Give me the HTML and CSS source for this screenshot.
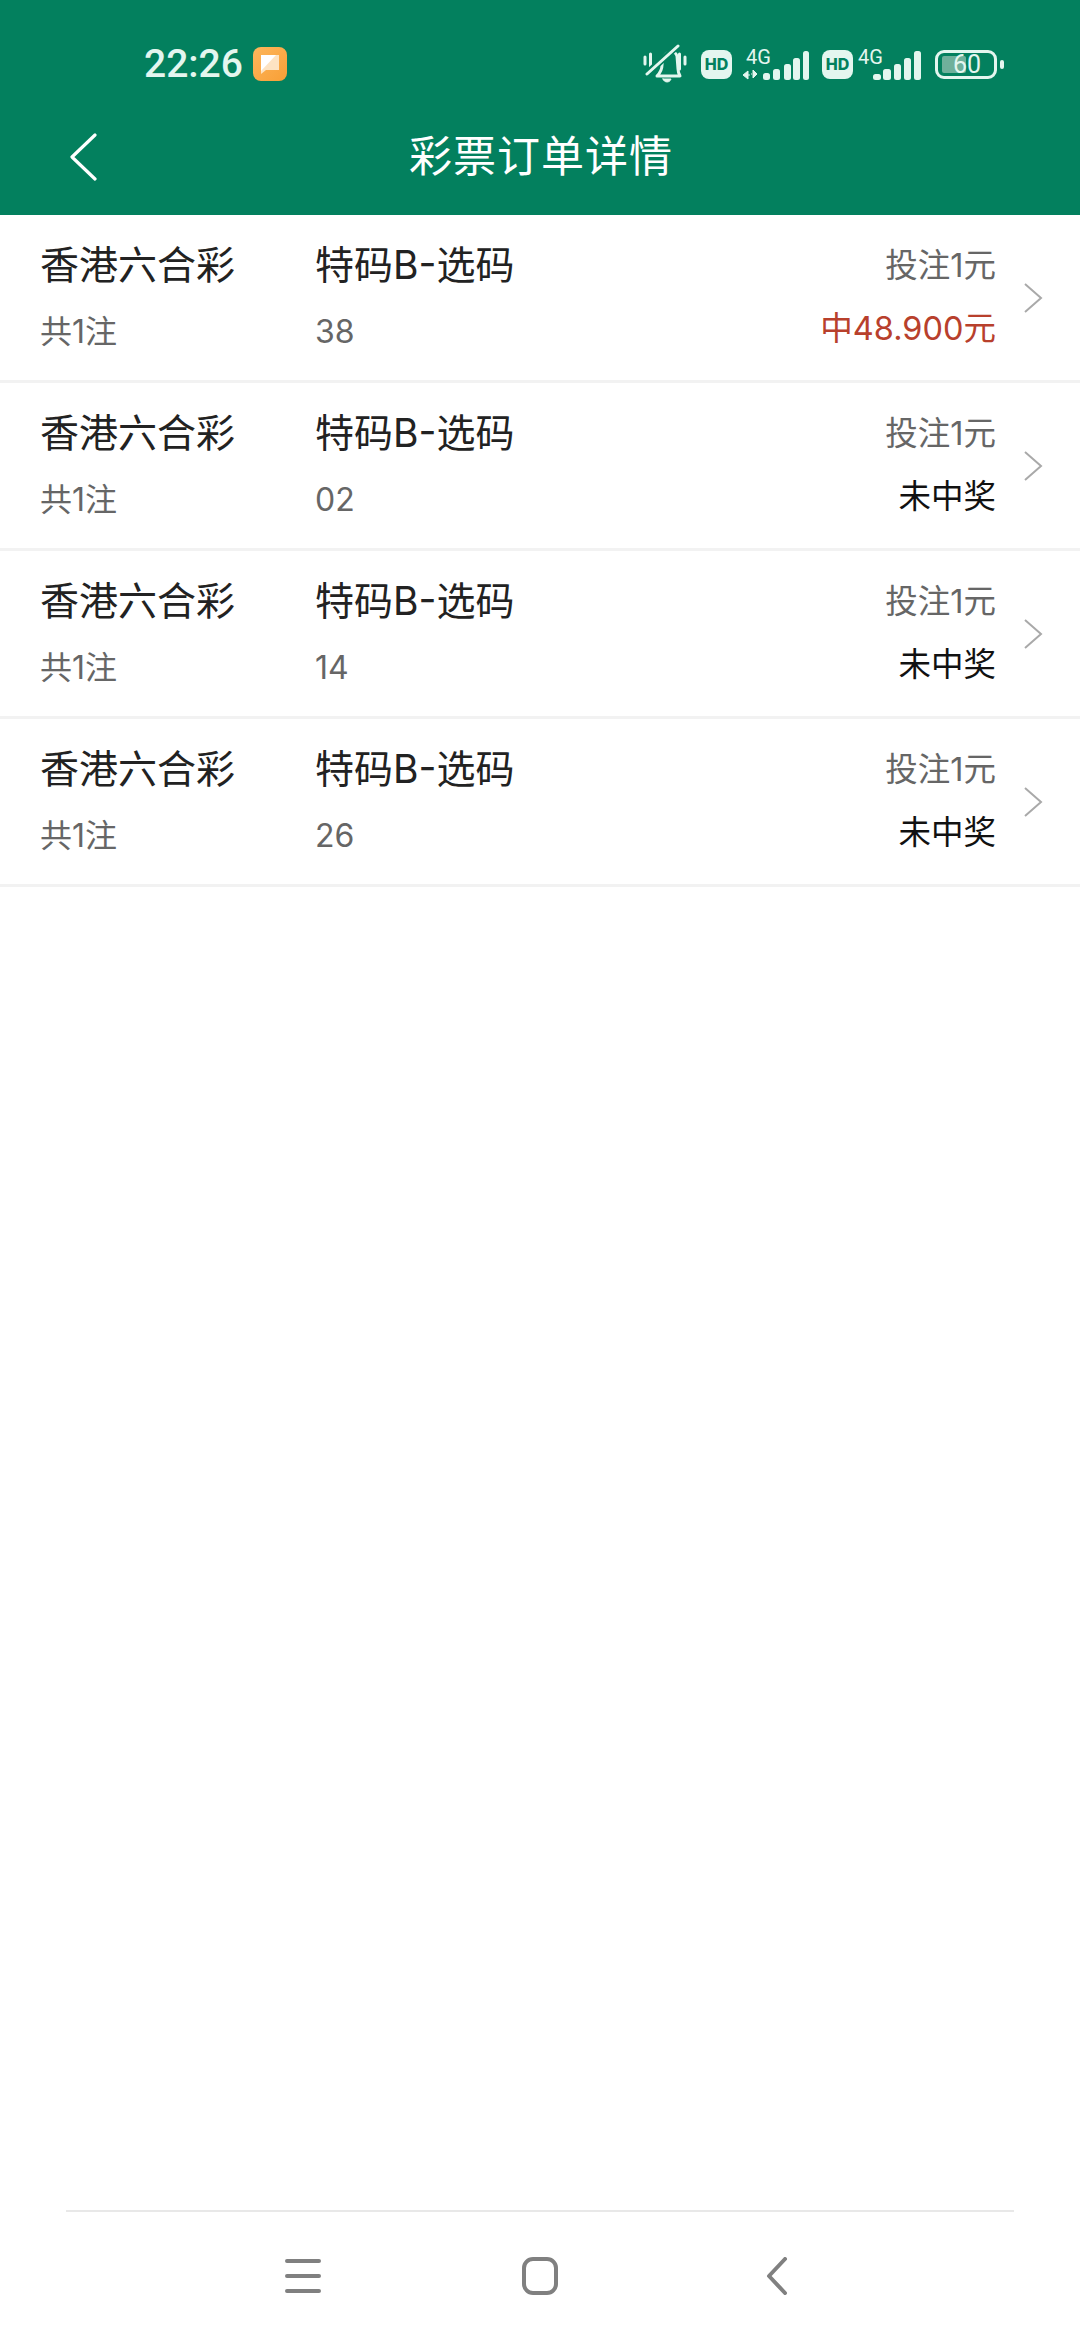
FILE: index.html
```html
<!DOCTYPE html>
<html lang="zh-CN">
<head>
    <meta charset="UTF-8">
    <meta name="viewport" content="width=device-width, initial-scale=1.0">
    <title>彩票订单详情</title>
    <link rel="stylesheet" href="styles.css">
</head>
<body>
    <div class="app">
        <header class="header">
            <div class="status-bar">
                <div class="status-left">
                    <span class="clock">22:26</span>
                    <svg class="notify" width="34" height="34" viewBox="0 0 34 34">
                        <defs>
                            <linearGradient id="notifyBg" x1="0" y1="0" x2="1" y2="1">
                                <stop offset="0" stop-color="#fdb65c"/>
                                <stop offset="1" stop-color="#f89f36"/>
                            </linearGradient>
                        </defs>
                        <rect width="34" height="34" rx="8" fill="url(#notifyBg)"/>
                        <path d="M8 8h18v15H13l-5 4z" fill="#fde3c2"/>
                        <path d="M8 8h15L8 24z" fill="#fff"/>
                    </svg>
                </div>
                <div class="status-right">
                    <svg class="mute" width="44" height="40" viewBox="0 0 44 40" fill="none" stroke="#e4f6ef" stroke-width="3" stroke-linecap="round" stroke-linejoin="round">
                        <path d="M2 13v7M7.500 10v15M36.500 10v15M42 13v7"/>
                        <path d="M14 32c3-3 5-6 5-11 0-8 3-12 8-13 3-1 6 1 7 4l1 13c0 3 1 5 2 7z"/>
                        <path d="M8 26 31 5" stroke="#03805e" stroke-width="7"/>
                        <path d="M4 30 35 2"/>
                        <path d="M20 35h8c-1 4-7 4-8 0z" fill="#e4f6ef" stroke-width="1"/>
                    </svg>
                    <span class="hd">HD</span>
                    <div class="signal signal-roaming">
                        <span class="net">4G</span>
                        <svg width="66" height="31" viewBox="0 0 66 31">
                            <path d="M0 26l5-4v8zM5 26h2M10 21v8l4-4zM9 25H8" fill="#e4f6ef" stroke="#e4f6ef" stroke-width="1"/>
                            <rect x="20" y="24" width="7" height="7" rx="2.500" fill="#e4f6ef"/>
                            <rect x="30" y="20" width="7" height="11" rx="2.500" fill="#e4f6ef"/>
                            <rect x="41" y="15" width="7" height="16" rx="2.500" fill="#e4f6ef"/>
                            <rect x="50" y="9" width="7" height="22" rx="2.500" fill="#e4f6ef"/>
                            <rect x="60" y="2" width="6" height="29" rx="2.500" fill="#e4f6ef"/>
                        </svg>
                    </div>
                    <span class="hd hd-tight">HD</span>
                    <div class="signal signal-plain">
                        <span class="net">4G</span>
                        <svg width="64" height="31" viewBox="0 0 64 31">
                            <rect x="15" y="25" width="8" height="6" rx="2.500" fill="#e4f6ef"/>
                            <rect x="25" y="20" width="8" height="11" rx="2.500" fill="#e4f6ef"/>
                            <rect x="36" y="15" width="7" height="16" rx="2.500" fill="#e4f6ef"/>
                            <rect x="46" y="9" width="7" height="22" rx="2.500" fill="#e4f6ef"/>
                            <rect x="56" y="2" width="7" height="29" rx="2.500" fill="#e4f6ef"/>
                        </svg>
                    </div>
                    <div class="battery">
                        <div class="battery-body">
                            <span class="battery-level"></span>
                            <span class="battery-num">60</span>
                        </div>
                        <span class="battery-cap"></span>
                    </div>
                </div>
            </div>
            <div class="title-bar">
                <svg class="back" width="30" height="48" viewBox="0 0 30 48" fill="none" stroke="#fff" stroke-width="3.2" stroke-linecap="round" stroke-linejoin="round">
                    <path d="M26 2 3 24l23 22"/>
                </svg>
                <h1 class="title">彩票订单详情</h1>
            </div>
        </header>

        <main class="list">
            <div class="row">
                <div class="col-name">
                    <div class="main-text">香港六合彩</div>
                    <div class="sub-text">共1注</div>
                </div>
                <div class="col-play">
                    <div class="main-text">特码B-选码</div>
                    <div class="sub-text">38</div>
                </div>
                <div class="col-money">
                    <div class="stake">投注1元</div>
                    <div class="result win">中48.900元</div>
                </div>
                <svg class="arrow" width="20" height="32" viewBox="0 0 20 32" fill="none" stroke="#a9a9a9" stroke-width="2">
                    <path d="M2 2l16 14L2 30"/>
                </svg>
            </div>
            <div class="row">
                <div class="col-name">
                    <div class="main-text">香港六合彩</div>
                    <div class="sub-text">共1注</div>
                </div>
                <div class="col-play">
                    <div class="main-text">特码B-选码</div>
                    <div class="sub-text">02</div>
                </div>
                <div class="col-money">
                    <div class="stake">投注1元</div>
                    <div class="result">未中奖</div>
                </div>
                <svg class="arrow" width="20" height="32" viewBox="0 0 20 32" fill="none" stroke="#a9a9a9" stroke-width="2">
                    <path d="M2 2l16 14L2 30"/>
                </svg>
            </div>
            <div class="row">
                <div class="col-name">
                    <div class="main-text">香港六合彩</div>
                    <div class="sub-text">共1注</div>
                </div>
                <div class="col-play">
                    <div class="main-text">特码B-选码</div>
                    <div class="sub-text">14</div>
                </div>
                <div class="col-money">
                    <div class="stake">投注1元</div>
                    <div class="result">未中奖</div>
                </div>
                <svg class="arrow" width="20" height="32" viewBox="0 0 20 32" fill="none" stroke="#a9a9a9" stroke-width="2">
                    <path d="M2 2l16 14L2 30"/>
                </svg>
            </div>
            <div class="row">
                <div class="col-name">
                    <div class="main-text">香港六合彩</div>
                    <div class="sub-text">共1注</div>
                </div>
                <div class="col-play">
                    <div class="main-text">特码B-选码</div>
                    <div class="sub-text">26</div>
                </div>
                <div class="col-money">
                    <div class="stake">投注1元</div>
                    <div class="result">未中奖</div>
                </div>
                <svg class="arrow" width="20" height="32" viewBox="0 0 20 32" fill="none" stroke="#a9a9a9" stroke-width="2">
                    <path d="M2 2l16 14L2 30"/>
                </svg>
            </div>
        </main>

        <nav class="nav-bar">
            <svg width="36" height="36" viewBox="0 0 36 36" fill="none" stroke="#808080" stroke-width="4" stroke-linecap="round">
                <path d="M2 3h32M2 18h32M2 33h32"/>
            </svg>
            <svg width="36" height="38" viewBox="0 0 36 38" fill="none" stroke="#808080" stroke-width="4">
                <rect x="2" y="2" width="32" height="34" rx="9"/>
            </svg>
            <svg width="22" height="38" viewBox="0 0 22 38" fill="none" stroke="#808080" stroke-width="4" stroke-linecap="round" stroke-linejoin="round">
                <path d="M19 2 3 19l16 17"/>
            </svg>
        </nav>
    </div>
</body>
</html>
```

FILE: styles.css
```css
* {
    box-sizing: border-box;
}
body {
    margin: 0;
    background-color: white;
    font-family: Inter, "Noto Sans CJK SC", sans-serif;
}
.app {
    display: flex;
    flex-direction: column;
    width: 1080px;
    height: 2340px;
}

/* green top area */
.header {
    height: 215px;
    background-color: #03805e;
}
.status-bar {
    display: flex;
    justify-content: space-between;
    align-items: center;
    height: 128px;
    padding: 0 76px 0 144px;
}
.status-left {
    display: flex;
    align-items: center;
    gap: 10px;
}
.clock {
    font-family: Roboto, sans-serif;
    font-size: 39px;
    font-weight: 500;
    color: #e4f6ef;
}
.status-right {
    display: flex;
    align-items: center;
}
.mute {
    margin-right: 14px;
}
.hd {
    width: 31px;
    height: 29px;
    margin-right: 11px;
    border-radius: 8px;
    background-color: #e4f6ef;
    color: #03805e;
    font-size: 16px;
    font-weight: 800;
    line-height: 29px;
    text-align: center;
}
.hd-tight {
    margin-right: 5px;
}
.signal {
    position: relative;
    height: 31px;
    margin-right: 13px;
}
.signal-roaming {
    width: 66px;
}
.signal-plain {
    width: 64px;
}
.signal svg {
    display: block;
}
.net {
    position: absolute;
    top: -2px;
    color: #e4f6ef;
    font-family: Roboto, sans-serif;
    font-size: 20px;
    line-height: 20px;
}
.signal-roaming .net {
    left: 3px;
}
.signal-plain .net {
    left: 0;
}
.battery {
    display: flex;
    align-items: center;
    gap: 3px;
}
.battery-body {
    position: relative;
    width: 62px;
    height: 29px;
    border: 3px solid #e4f6ef;
    border-radius: 9px;
}
.battery-level {
    position: absolute;
    top: 3px;
    bottom: 3px;
    left: 4px;
    width: 24px;
    border-radius: 2px;
    background-color: #6fb09b;
}
.battery-num {
    position: absolute;
    inset: 0;
    padding-left: 2px;
    color: #e4f6ef;
    font-family: Roboto, sans-serif;
    font-size: 25px;
    line-height: 23px;
    text-align: center;
}
.battery-cap {
    width: 4px;
    height: 9px;
    border-radius: 2px;
    background-color: #e4f6ef;
}
.title-bar {
    position: relative;
    height: 57px;
    display: flex;
    justify-content: center;
    align-items: center;
    padding-bottom: 8px;
}
.back {
    position: absolute;
    left: 69px;
    top: 5px;
}
.title {
    margin: 0 0 0 2px;
    font-size: 43px;
    font-weight: 400;
    color: white;
    letter-spacing: 1px;
}

/* order rows */
.list {
    flex: 1;
}
.row {
    display: flex;
    align-items: center;
    height: 168px;
    padding: 0 37px 0 40px;
    border-bottom: 3px solid #f2f2f2;
}
.col-name {
    width: 275px;
}
.col-play {
    flex: 1;
}
.col-money {
    text-align: right;
    margin-right: 27px;
}
.main-text {
    font-size: 39px;
    line-height: 52px;
    color: #222;
    margin-bottom: 19px;
}
.sub-text {
    font-size: 32px;
    line-height: 44px;
    margin-bottom: 2px;
    color: #666;
}
.stake {
    font-size: 32.500px;
    line-height: 52px;
    color: #666;
    margin-bottom: 13px;
}
.result {
    font-size: 32.500px;
    line-height: 48px;
    margin-bottom: 2px;
    color: #111;
}
.result.win {
    color: #b8402c;
}

/* system buttons */
.nav-bar {
    display: grid;
    grid-template-columns: repeat(3, 237px);
    justify-content: center;
    justify-items: center;
    align-items: center;
    height: 130px;
    margin: 0 66px;
    border-top: 2px solid #e8e8e8;
}
```
